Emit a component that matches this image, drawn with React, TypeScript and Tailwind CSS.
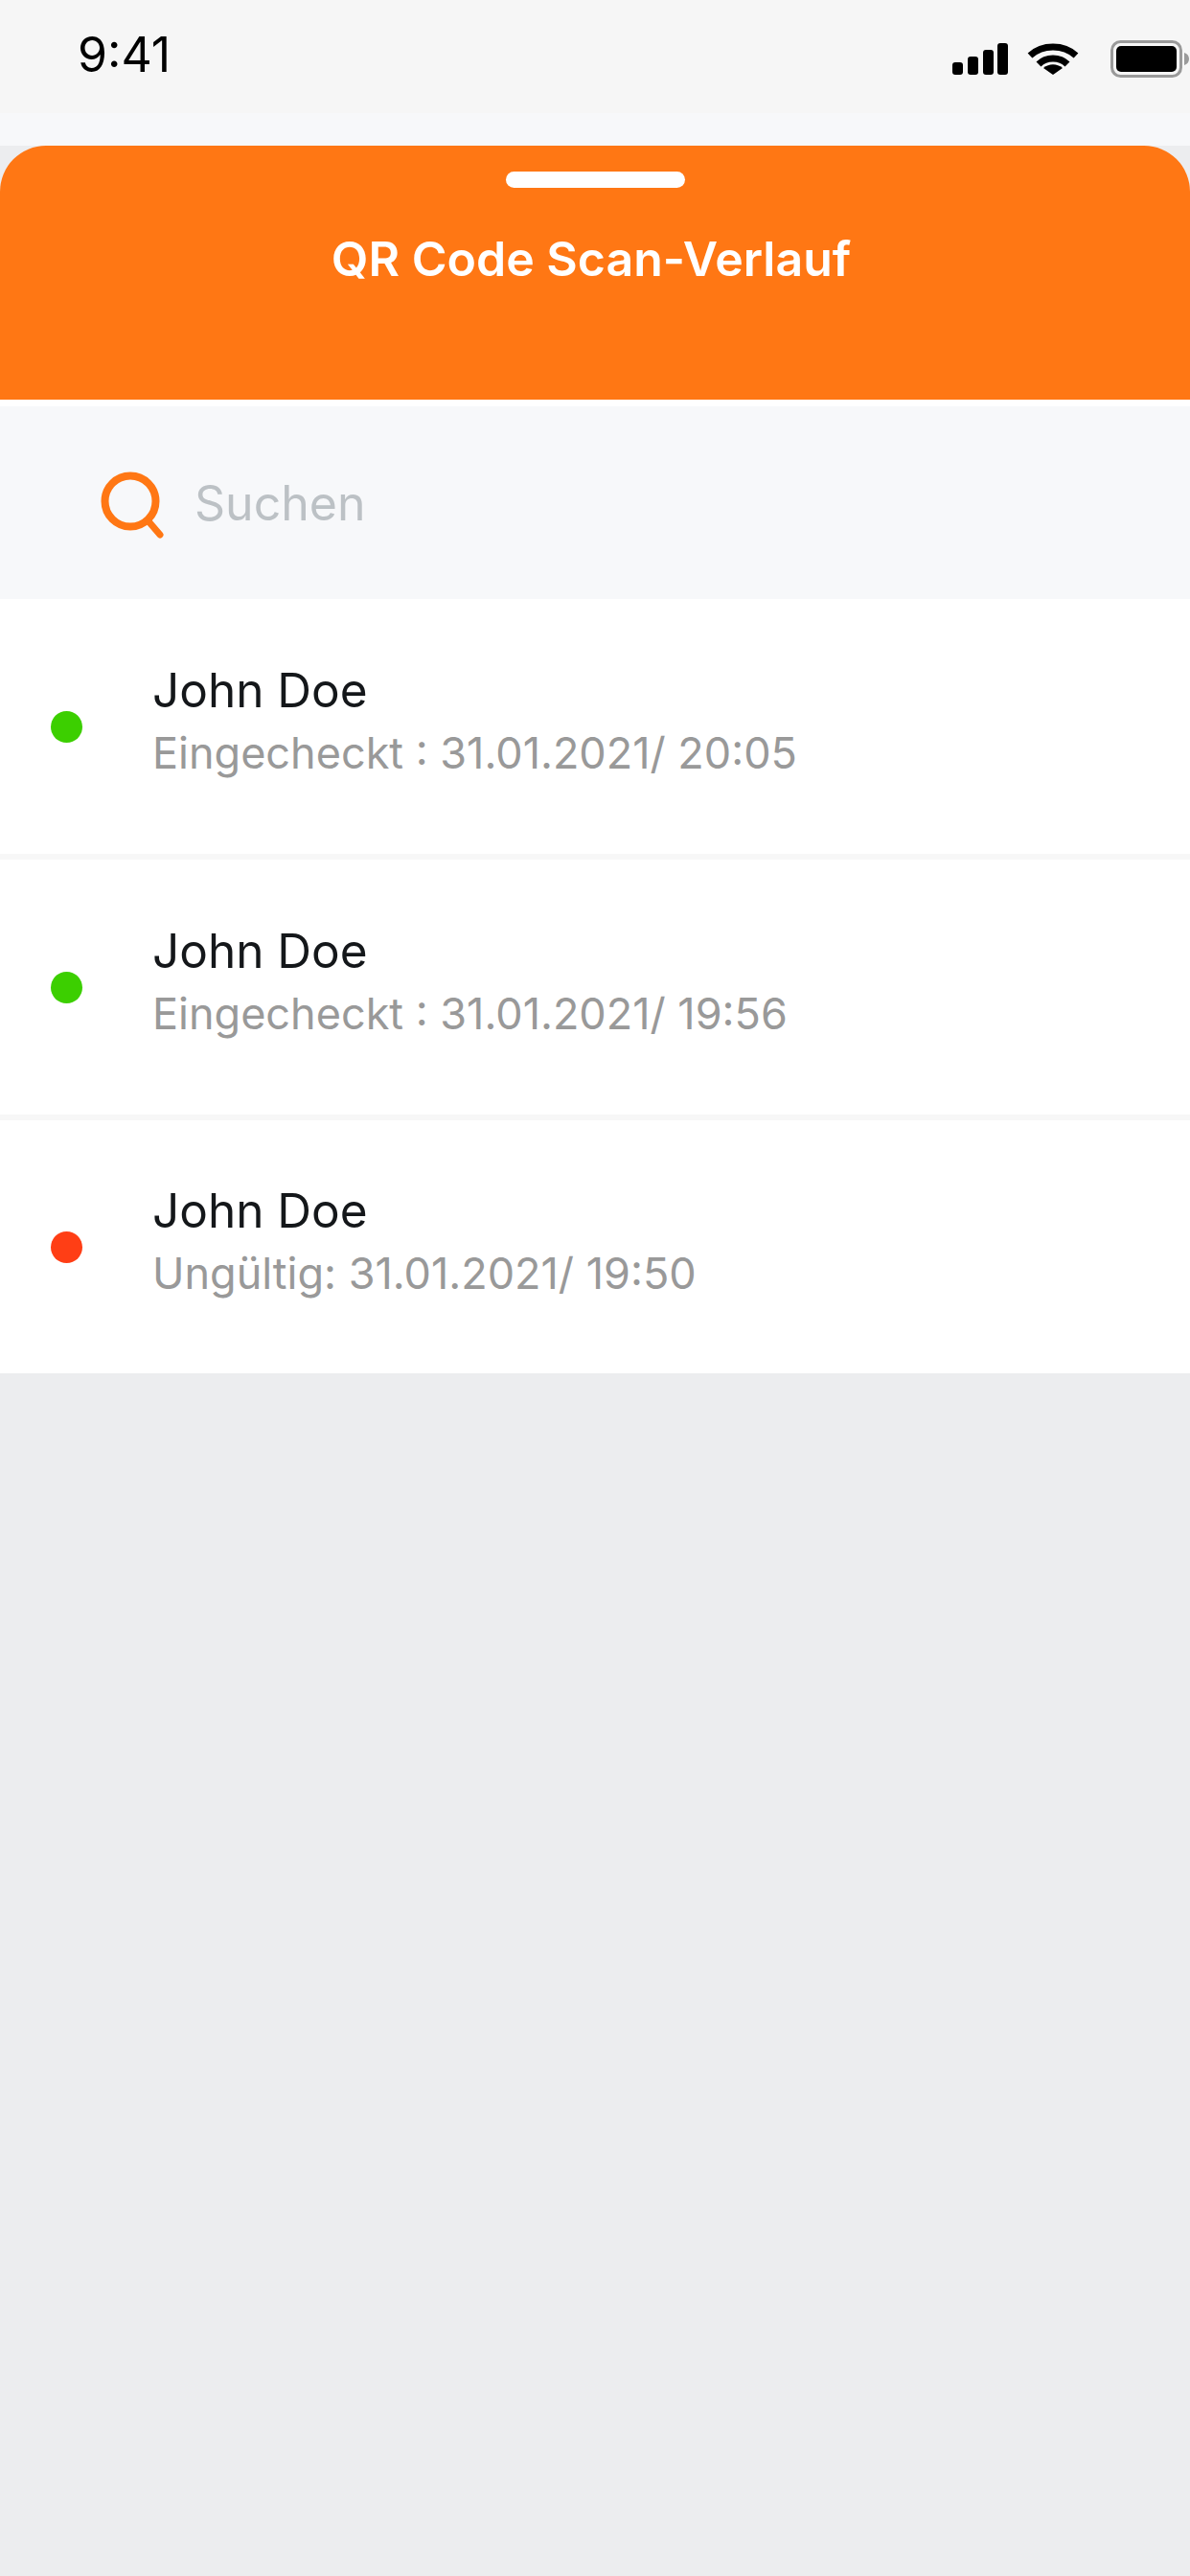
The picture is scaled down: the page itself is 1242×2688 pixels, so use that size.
const rows = [
  { color: "bg-[#3ccf00]", height: "h-[266px]", text: "Eingecheckt : 31.01.2021/ 20:05" },
  { color: "bg-[#3ccf00]", height: "h-[266px]", text: "Eingecheckt : 31.01.2021/ 19:56" },
  { color: "bg-[#ff3e15]", height: "h-[264px]", text: "Ungültig: 31.01.2021/ 19:50" },
];

export default function App() {
  return (
    <div className="flex min-h-[2688px] w-[1242px] flex-col bg-[#ecedef] font-['Inter',sans-serif]">
      <div className="flex h-[118px] items-start justify-between bg-[#f6f6f6] pl-[81px] pr-0">
        <span className="mt-[28px] text-[50px] leading-[58px] text-black">9:41</span>
        <div className="mt-[42px] flex items-center">
          <svg width="58" height="34" viewBox="0 0 58 34" fill="#000">
            <rect x="0" y="20" width="11" height="13" rx="3" />
            <rect x="16" y="14" width="11" height="19" rx="3" />
            <rect x="32" y="7" width="11" height="26" rx="3" />
            <rect x="47" y="0" width="11" height="33" rx="3" />
          </svg>
          <svg className="ml-[20px]" width="54" height="34" viewBox="0 0 54 34" fill="none" stroke="#000">
            <path d="M3 13C16 1 38 1 51 13" strokeWidth="7" />
            <path d="M12 22C20 14 34 14 42 22" strokeWidth="7" />
            <path d="M17 26L27 33L37 26C31 21 23 21 17 26Z" fill="#000" stroke="none" />
          </svg>
          <svg className="ml-[33px]" width="83" height="40" viewBox="0 0 83 40">
            <rect x="1.5" y="1.5" width="72" height="36" rx="9" fill="none" stroke="#9a9a9a" strokeWidth="3" />
            <rect x="6" y="6" width="63" height="27" rx="5" fill="#000" />
            <path d="M77 13C80 14 82 16 82 19.5C82 23 80 25 77 26Z" fill="#9a9a9a" />
          </svg>
        </div>
      </div>
      <div className="h-[34px] bg-[#f7f8fa]" />
      <div className="flex h-[265px] flex-col items-center rounded-t-[48px] bg-[#ff7714]">
        <div className="mt-[27px] h-[17px] w-[187px] rounded-full bg-white" />
        <h1 className="mr-[8px] mt-[46px] text-[50px] leading-[56px] font-semibold text-white">QR Code Scan-Verlauf</h1>
      </div>
      <div className="h-[7px] bg-white" />
      <div className="flex h-[201px] items-center bg-[#f7f8fa] pl-[105px]">
        <svg className="mt-[3px]" width="68" height="72" viewBox="0 0 68 72" fill="none" stroke="#ff7714" strokeWidth="8" strokeLinecap="round">
          <circle cx="31" cy="33" r="26.5" />
          <path d="M50 54L62 68" strokeWidth="7" />
        </svg>
        <span className="ml-[30px] text-[50px] leading-[56px] text-[#bcc1c5]">Suchen</span>
      </div>
      <div className="flex flex-col gap-[6px] bg-[#f7f7f7]">
        {rows.map((row, i) => (
          <div key={i} className={`flex items-center bg-white pl-[53px] ${row.height}`}>
            <span className={`h-[33px] w-[33px] rounded-full ${row.color}`} />
            <div className="ml-[73px] flex flex-col pb-[10px]">
              <span className="text-[49.5px] leading-[65px] text-[#14171a]">John Doe</span>
              <span className="text-[45px] leading-[65px] text-[#999999]">{row.text}</span>
            </div>
          </div>
        ))}
      </div>
    </div>
  );
}
